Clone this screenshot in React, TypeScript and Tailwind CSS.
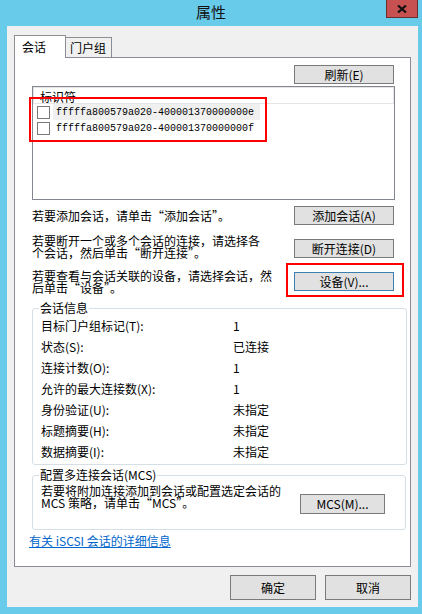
import type { ReactNode } from 'react';

const infoRows: [string, string][] = [
  ['目标门户组标记(T):', '1'],
  ['状态(S):', '已连接'],
  ['连接计数(O):', '1'],
  ['允许的最大连接数(X):', '1'],
  ['身份验证(U):', '未指定'],
  ['标题摘要(H):', '未指定'],
  ['数据摘要(I):', '未指定'],
];

const sessions = ['fffffa800579a020-400001370000000e', 'fffffa800579a020-400001370000000f'];

function Button({ children, className = '' }: { children: ReactNode; className?: string }) {
  return (
    <div
      className={`flex items-center justify-center border bg-[#E1E1E1] text-[12px] leading-[12px] ${className}`}
    >
      {children}
    </div>
  );
}

function App() {
  return (
    <div className="w-[422px] h-[614px] bg-[#69CBEA] flex flex-col text-black font-['Noto_Sans_CJK_SC',sans-serif]">
      {/* title bar */}
      <div className="h-[26px] grid grid-cols-[1fr_auto_1fr]">
        <div />
        <div className="text-[15px] leading-[24px] text-[#111]">属性</div>
        <div className="flex justify-end items-start pr-[4px]">
          <div className="w-[32px] h-[18px] bg-[#C75050] border border-[#6B2E2A] border-t-0 flex items-center justify-center">
            <svg width="10" height="8" viewBox="0 0 10 8">
              <path d="M1 0.5 L9 7.5 M9 0.5 L1 7.5" stroke="#111" strokeWidth="2.2" />
            </svg>
          </div>
        </div>
      </div>

      {/* client area */}
      <div className="ml-[7px] w-[411px] h-[581px] bg-[#F0F0F0] flex flex-col pt-[9px] px-[7px]">
        {/* tabs */}
        <div className="h-[23px] flex items-end relative z-10">
          <div className="w-[52px] h-[23px] bg-white border border-b-0 border-[#8C8E94] pl-[7px] text-[12px] leading-[21px]">
            会话
          </div>
          <div className="w-[46px] h-[20px] mb-[1px] border-t border-r border-[#8C8E94] bg-[#F0F0F0] pl-[4px] text-[12px] leading-[19px]">
            门户组
          </div>
        </div>

        {/* tab panel */}
        <div className="-mt-px w-[397px] h-[510px] bg-white border border-[#898C95] flex flex-col text-[12px]">
          <div className="flex justify-end pr-[16px] mt-[7px]">
            <Button className="w-[100px] h-[19px] border-[#7A7A7A]">刷新(E)</Button>
          </div>

          {/* session list */}
          <div className="relative ml-[17px] mt-[2px] w-[363px] h-[114px] border border-[#828790] flex flex-col">
            <div className="h-[17px] overflow-hidden border border-[#E5E5E5] pl-[6px] pt-[3px] text-[12px] leading-[12px]">
              标识符
            </div>
            {sessions.map((s, i) => (
              <div key={s} className="h-[16px] flex items-center">
                <div className="ml-[4px] w-[13px] h-[13px] border border-[#7A7A7A] bg-white" />
                <span
                  className={`ml-[3px] h-[16px] pl-[3px] pr-[6px] flex items-center font-['Liberation_Mono',monospace] text-[10px] ${
                    i === 0 ? 'bg-[#F0F0F0]' : ''
                  }`}
                >
                  {s}
                </span>
              </div>
            ))}
            <div className="absolute left-[-4px] top-[10px] w-[238px] h-[45px] border-2 border-[#FF0000]" />
          </div>

          {/* add */}
          <div className="ml-[17px] mr-[16px] mt-[6px] flex justify-between items-start">
            <div className="mt-[4px] leading-[12px]">若要添加会话，请单击“添加会话”。</div>
            <Button className="w-[100px] h-[19px] border-[#7A7A7A]">添加会话(A)</Button>
          </div>

          {/* disconnect */}
          <div className="ml-[17px] mr-[16px] mt-[10px] flex justify-between items-start">
            <div className="leading-[12px]">
              若要断开一个或多个会话的连接，请选择各
              <br />
              个会话，然后单击“断开连接”。
            </div>
            <Button className="mt-[4px] w-[100px] h-[19px] border-[#7A7A7A]">断开连接(D)</Button>
          </div>

          {/* devices */}
          <div className="ml-[17px] mr-[16px] mt-[11px] flex justify-between items-start">
            <div className="leading-[12px]">
              若要查看与会话关联的设备，请选择会话，然
              <br />
              后单击“设备”。
            </div>
            <div className="relative mt-[2px]">
              <Button className="w-[100px] h-[19px] border-[#3C7FB1]">设备(V)...</Button>
              <div className="absolute left-[-8px] right-[-10px] top-[-9px] bottom-[-6px] border-2 border-[#FF0000]" />
            </div>
          </div>

          {/* session info */}
          <fieldset className="ml-[17px] mt-[8px] w-[375px] border border-[#D5DFE5] rounded-[3px] pl-[7px] pb-[2px]">
            <legend className="px-[1px] -ml-px text-[12px] leading-[12px]">会话信息</legend>
            <div className="ml-[1px] mt-[1px] flex flex-col">
              {infoRows.map(([label, value]) => (
                <div key={label} className="h-[21px] flex items-center leading-[12px]">
                  <div className="w-[192px]">{label}</div>
                  <div>{value}</div>
                </div>
              ))}
            </div>
          </fieldset>

          {/* MCS */}
          <fieldset className="ml-[17px] mt-[4px] w-[374px] border border-[#D5DFE5] rounded-[3px] pl-[7px]">
            <legend className="px-[1px] -ml-px text-[12px] leading-[12px]">配置多连接会话(MCS)</legend>
            <div className="ml-[1px] mt-[4px] h-[44px] flex justify-between items-start pr-[20px]">
              <div className="leading-[12px]">
                若要将附加连接添加到会话或配置选定会话的
                <br />
                MCS 策略，请单击“MCS”。
              </div>
              <Button className="mt-[9px] w-[85px] h-[20px] border-[#7A7A7A]">MCS(M)...</Button>
            </div>
          </fieldset>

          <div className="ml-[14px] mt-[5px] leading-[12px] text-[#0066CC] underline">有关 iSCSI 会话的详细信息</div>
        </div>

        {/* dialog buttons */}
        <div className="mt-[8px] flex justify-end gap-[9px]">
          <Button className="w-[86px] h-[25px] border-[#7A7A7A]">确定</Button>
          <Button className="w-[86px] h-[25px] border-[#7A7A7A]">取消</Button>
        </div>
      </div>
    </div>
  );
}

export default App;
